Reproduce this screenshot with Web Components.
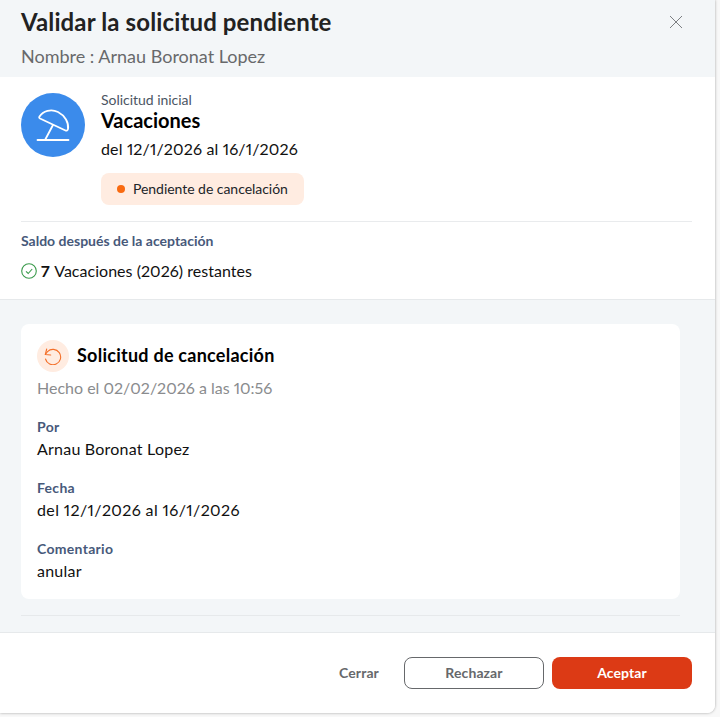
<!DOCTYPE html>
<html lang="es">
<head>
<meta charset="utf-8">
<title>Validar la solicitud pendiente</title>
<style>
html,body{margin:0;padding:0;height:100%;background:#f8f8f8;font-family:Lato,"Liberation Sans",sans-serif;font-variant-numeric:proportional-nums;}
</style>
</head>
<body>
<modal-validar>
    <modal-cabecera slot="cabecera" titulo="Validar la solicitud pendiente" nombre="Nombre : Arnau Boronat Lopez"></modal-cabecera>
    <resumen-solicitud slot="resumen"></resumen-solicitud>
    <tarjeta-cancelacion slot="detalle">
        <campo-dato etiqueta="Por" valor="Arnau Boronat Lopez"></campo-dato>
        <campo-dato etiqueta="Fecha" valor="del 12/1/2026 al 16/1/2026" style="--tracking:.38px"></campo-dato>
        <campo-dato etiqueta="Comentario" valor="anular"></campo-dato>
    </tarjeta-cancelacion>
    <modal-pie slot="pie"></modal-pie>
</modal-validar>

<script>
class ModalValidar extends HTMLElement{
    constructor(){
        super();
        this.attachShadow({mode:'open'}).innerHTML=`
<style>
    :host{
        display:flex;
        flex-direction:column;
        box-sizing:border-box;
        width:715px;
        height:713px;
        background:#fff;
        border-bottom-right-radius:8px;
        box-shadow:0 0 3px rgba(0,0,0,.35);
        overflow:hidden;
    }
    .detalle{
        flex:1;
        background:#f3f6f8;
        border-top:1px solid #e6e9eb;
        border-bottom:1px solid #e6e9eb;
        padding:24px 35px 0 21px;
    }
    .linea{height:1px;background:#e6e9eb;margin-top:16px;}
</style>
<slot name="cabecera"></slot>
<slot name="resumen"></slot>
<div class="detalle"><slot name="detalle"></slot><div class="linea"></div></div>
<slot name="pie"></slot>`;
    }
}

class ModalCabecera extends HTMLElement{
    connectedCallback(){
        this.attachShadow({mode:'open'}).innerHTML=`
<style>
    :host{
        display:flex;
        justify-content:space-between;
        align-items:flex-start;
        background:#f3f6f8;
        height:77px;
        box-sizing:border-box;
        padding:7px 32px 0 21px;
    }
    h1{margin:0;font-size:24px;line-height:30px;font-weight:700;color:#222;letter-spacing:.13px;}
    p{margin:6px 0 0;font-size:18px;line-height:27px;color:#68696b;}
    svg{display:block;margin-top:8px;}
</style>
<div>
    <h1>${this.getAttribute('titulo')}</h1>
    <p>${this.getAttribute('nombre')}</p>
</div>
<svg width="14" height="14" viewBox="0 0 14 14" fill="none" stroke="#7c7f82" stroke-width="1"><path d="M1 1l12 12M13 1L1 13"/></svg>`;
    }
}

class ResumenSolicitud extends HTMLElement{
    constructor(){
        super();
        this.attachShadow({mode:'open'}).innerHTML=`
<style>
    :host{display:block;padding:16px 23px 0 21px;color:#111;}
    .fila{display:flex;gap:16px;padding-bottom:16px;border-bottom:1px solid #e9ebed;}
    .avatar{flex:none;width:64px;height:64px;border-radius:50%;background:#3b8beb;display:flex;align-items:center;justify-content:center;}
    .tipo{font-size:14px;line-height:14px;color:#4b5563;letter-spacing:-.03px;}
    .nombre{font-size:20px;line-height:26px;font-weight:700;color:#000;}
    .fechas{font-size:16px;line-height:24px;margin-top:4px;letter-spacing:.15px;}
    .estado{display:inline-flex;align-items:center;gap:8px;height:32px;padding:0 16px;margin-top:12px;border-radius:8px;background:#ffece1;font-size:14px;line-height:30px;color:#212529;letter-spacing:-.04px;}
    .punto{width:8px;height:8px;border-radius:50%;background:#f96a10;}
    h2{margin:0;padding-top:10px;font-size:14px;line-height:18px;font-weight:700;color:#47597a;}
    .saldo{display:flex;align-items:center;gap:4px;margin-top:9px;padding-bottom:16px;font-size:16px;line-height:24px;letter-spacing:.03px;}
    b{font-weight:700;margin-right:1px;}
</style>
<div class="fila">
    <div class="avatar">
        <svg width="36" height="36" viewBox="0 0 36 36" fill="none" stroke="#fff" stroke-width="1.800" stroke-linejoin="round" stroke-linecap="round">
            <path d="M4.500 9.500C8 4 16 1.500 23 5c7 3.500 11 11 10 17-.2 1.500-1.500 2-2.500 1.500L5 11.500c-1-.5-1-1.200-.5-2z"/>
            <path d="M18 18l-8 15M2.500 33h31"/>
        </svg>
    </div>
    <div>
        <div class="tipo">Solicitud inicial</div>
        <div class="nombre">Vacaciones</div>
        <div class="fechas">del 12/1/2026 al 16/1/2026</div>
        <div class="estado"><span class="punto"></span>Pendiente de cancelación</div>
    </div>
</div>
<h2>Saldo después de la aceptación</h2>
<div class="saldo">
    <svg width="16" height="16" viewBox="0 0 16 16" fill="none" stroke="#3a9a4b" stroke-width="1.100"><circle cx="8" cy="8" r="7.300"/><path d="M5 8.300l2.200 2.200 4-4.500"/></svg>
    <span><b>7</b> Vacaciones (2026) restantes</span>
</div>`;
    }
}

class TarjetaCancelacion extends HTMLElement{
    constructor(){
        super();
        this.attachShadow({mode:'open'}).innerHTML=`
<style>
    :host{display:block;background:#fff;border-radius:8px;padding:16px;color:#111;}
    .titulo{display:flex;align-items:center;gap:8px;}
    .icono{width:32px;height:32px;border-radius:50%;background:#ffece1;display:flex;align-items:center;justify-content:center;}
    h3{margin:0 0 2px;font-size:18px;line-height:30px;font-weight:700;color:#000;letter-spacing:.25px;}
    .hecho{font-size:16px;line-height:24px;color:#8a8c8e;margin-top:4px;}
    .campos{display:flex;flex-direction:column;gap:17px;margin-top:17px;}
</style>
<div class="titulo">
    <div class="icono">
        <svg width="18" height="18" viewBox="0 0 18 18" fill="none" stroke="#f4702a" stroke-width="1.100" stroke-linecap="round" stroke-linejoin="round">
            <path d="M1.300 7.500L3.500 4.600A7.700 7.700 0 1 1 1.500 12"/><path d="M2.700 2L1.300 7.500l5.400.5"/>
        </svg>
    </div>
    <h3>Solicitud de cancelación</h3>
</div>
<div class="hecho">Hecho el 02/02/2026 a las 10:56</div>
<div class="campos"><slot></slot></div>`;
    }
}

class CampoDato extends HTMLElement{
    connectedCallback(){
        this.attachShadow({mode:'open'}).innerHTML=`
<style>
    :host{display:block;}
    .etiqueta{font-size:14px;line-height:20px;font-weight:700;color:#47597a;letter-spacing:.3px;}
    .valor{font-size:16px;line-height:24px;color:#111;letter-spacing:var(--tracking,.22px);}
</style>
<div class="etiqueta">${this.getAttribute('etiqueta')}</div>
<div class="valor">${this.getAttribute('valor')}</div>`;
    }
}

class ModalPie extends HTMLElement{
    constructor(){
        super();
        this.attachShadow({mode:'open'}).innerHTML=`
<style>
    :host{display:flex;justify-content:flex-end;align-items:flex-start;gap:8px;height:80px;box-sizing:border-box;padding:24px 23px 0;background:#fff;}
    button{font:700 14px Lato,"Liberation Sans",sans-serif;letter-spacing:.1px;height:32px;border-radius:8px;cursor:pointer;padding:0 0 2px;}
    .cerrar{background:none;border:0;color:#66686b;width:42px;margin-right:16px;}
    .rechazar{background:#fff;border:1px solid #66686b;color:#66686b;width:140px;}
    .aceptar{background:#dc3a15;border:0;color:#fff;width:140px;}
</style>
<button class="cerrar">Cerrar</button>
<button class="rechazar">Rechazar</button>
<button class="aceptar">Aceptar</button>`;
    }
}

customElements.define('modal-validar',ModalValidar);
customElements.define('modal-cabecera',ModalCabecera);
customElements.define('resumen-solicitud',ResumenSolicitud);
customElements.define('tarjeta-cancelacion',TarjetaCancelacion);
customElements.define('campo-dato',CampoDato);
customElements.define('modal-pie',ModalPie);
</script>
</body>
</html>
